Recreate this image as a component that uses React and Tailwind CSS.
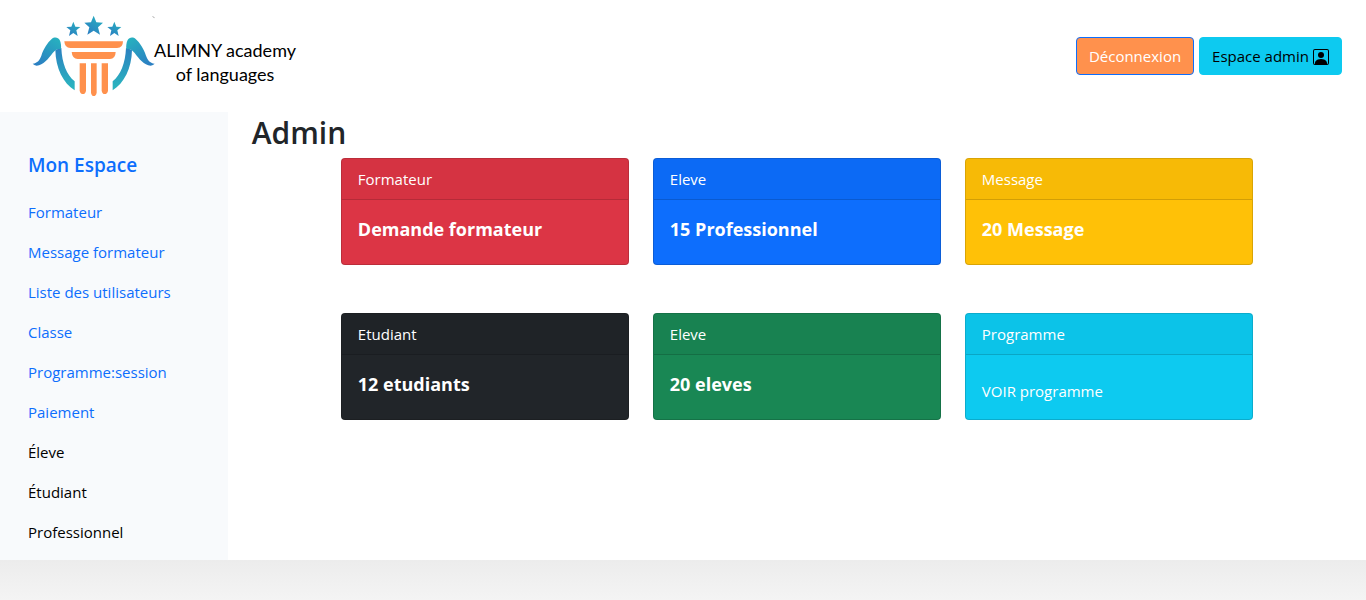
import { BsPersonSquare } from "react-icons/bs";

const links = [
  "Formateur",
  "Message formateur",
  "Liste des utilisateurs",
  "Classe",
  "Programme:session",
  "Paiement",
];

const labels = ["Éleve", "Étudiant", "Professionnel"];

const cards = [
  { header: "Formateur", title: "Demande formateur", color: "bg-[#dc3545]" },
  { header: "Eleve", title: "15 Professionnel", color: "bg-[#0d6efd]" },
  { header: "Message", title: "20 Message", color: "bg-[#ffc107]" },
  { header: "Etudiant", title: "12 etudiants", color: "bg-[#212529]" },
  { header: "Eleve", title: "20 eleves", color: "bg-[#198754]" },
  { header: "Programme", link: "VOIR programme", color: "bg-[#0dcaf0]" },
];

function LogoMark() {
  return (
    <svg
      className="overflow-visible"
      width="122"
      height="84"
      viewBox="3 -4 366 252"
      aria-hidden="true"
    >
      <defs>
        <linearGradient id="teal" x1="1" y1="0" x2="0.3" y2="1">
          <stop offset="0" stopColor="#27b5bf" />
          <stop offset="1" stopColor="#2b80c2" />
        </linearGradient>
        <linearGradient id="arm" x1="0" y1="0" x2="0" y2="1">
          <stop offset="0" stopColor="#2b80c0" />
          <stop offset="0.9" stopColor="#2bb2bf" />
        </linearGradient>
      </defs>
      <g fill="url(#teal)">
        <path d="M188 1l8 20 20 1-15 14 6 22-19-12-19 12 6-22-15-14 20-1z" />
        <path d="M127 19l6 15 15 1-12 10 4 17-13-9-13 9 4-17-12-10 15-1z" />
        <path d="M250 19l6 15 15 1-12 10 4 17-13-9-13 9 4-17-12-10 15-1z" />
      </g>
      <g id="wing">
        <path
          fill="url(#arm)"
          d="M73 103l18 -5C93 143 107 179 131 198V225C97 203 74 160 73 103z"
        />
        <path
          fill="url(#teal)"
          d="M5 145C20 143 26 134 31 121C38 100 50 81 62 71C70 64 82 66 86 74C90 82 91 92 90 102C78 98 73 104 65 113C52 130 37 150 17 151Q9 150 5 145z"
        />
      </g>
      <use href="#wing" transform="matrix(-1 0 0 1 376 0)" />
      <g fill="#ff914d">
        <path d="M100 78H276Q276 98 258 98H118Q101 98 100 78z" />
        <path d="M122 110H254Q253 131 237 131H140Q124 131 122 110z" />
        <path d="M146 144H165V226Q163 236 156 236Q148 236 146 226z" />
        <path d="M180 144H197V232Q195 242 188 242Q182 242 180 232z" />
        <path d="M212 144H231V226Q229 236 221 236Q214 236 212 226z" />
      </g>
      <path d="M365 2l2 4 4 1" fill="none" stroke="#999" strokeWidth="2" />
    </svg>
  );
}

function Card({ header, title, link, color }) {
  return (
    <article
      className={`w-72 overflow-hidden rounded border border-black/15 text-white ${color}`}
    >
      <header className="border-b border-black/15 bg-black/3 px-4 py-2">
        {header}
      </header>
      <div className="h-16 p-4">
        {title && (
          <h3 className="text-[18px] leading-[26px] font-bold">{title}</h3>
        )}
        {link && (
          <a href="#programme" className="mt-2 block">
            {link}
          </a>
        )}
      </div>
    </article>
  );
}

export default function App() {
  return (
    <div className="min-h-screen bg-linear-to-b from-[#ececec] from-[560px] to-[#f4f4f4] to-[600px] font-['Open_Sans','Noto_Sans',sans-serif] text-[15px] leading-6 text-[#212529]">
      <header className="flex h-28 items-center justify-between bg-white pr-6 pl-8">
        <a href="#accueil" className="flex items-center">
          <LogoMark />
          <span className="mt-3 text-center font-['Lato',sans-serif] text-[18px] leading-6 text-black">
            ALIMNY academy
            <br />
            of languages
          </span>
        </a>
        <div className="flex gap-[5px]">
          <button
            type="button"
            className="rounded border border-[#0d6efd] bg-[#ff914d] px-3 py-1.5 text-white"
          >
            Déconnexion
          </button>
          <button
            type="button"
            className="flex items-center gap-1 rounded border border-[#0dcaf0] bg-[#0dcaf0] px-3 py-1.5 text-black"
          >
            Espace admin
            <BsPersonSquare className="mt-0.5 size-4" aria-hidden="true" />
          </button>
        </div>
      </header>

      <div className="flex">
        <nav className="w-1/6 shrink-0 bg-[#f8fafc] px-7 pt-10 pb-2">
          <h2 className="mb-3.5 text-[19px] leading-[26px] font-semibold text-[#0d6efd]">
            Mon Espace
          </h2>
          <ul>
            {links.map((name) => (
              <li key={name} className="py-2">
                <a href="#" className="block whitespace-nowrap text-[#0d6efd]">
                  {name}
                </a>
              </li>
            ))}
            {labels.map((name) => (
              <li key={name} className="py-2 text-black">
                {name}
              </li>
            ))}
          </ul>
        </nav>

        <main className="flex-1 bg-white px-6">
          <h1 className="mb-1 text-[30px] leading-[42px] font-semibold">Admin</h1>
          <div className="flex flex-wrap justify-center gap-x-6 gap-y-12">
            {cards.map((card) => (
              <Card key={card.header + card.color} {...card} />
            ))}
          </div>
        </main>
      </div>
    </div>
  );
}
